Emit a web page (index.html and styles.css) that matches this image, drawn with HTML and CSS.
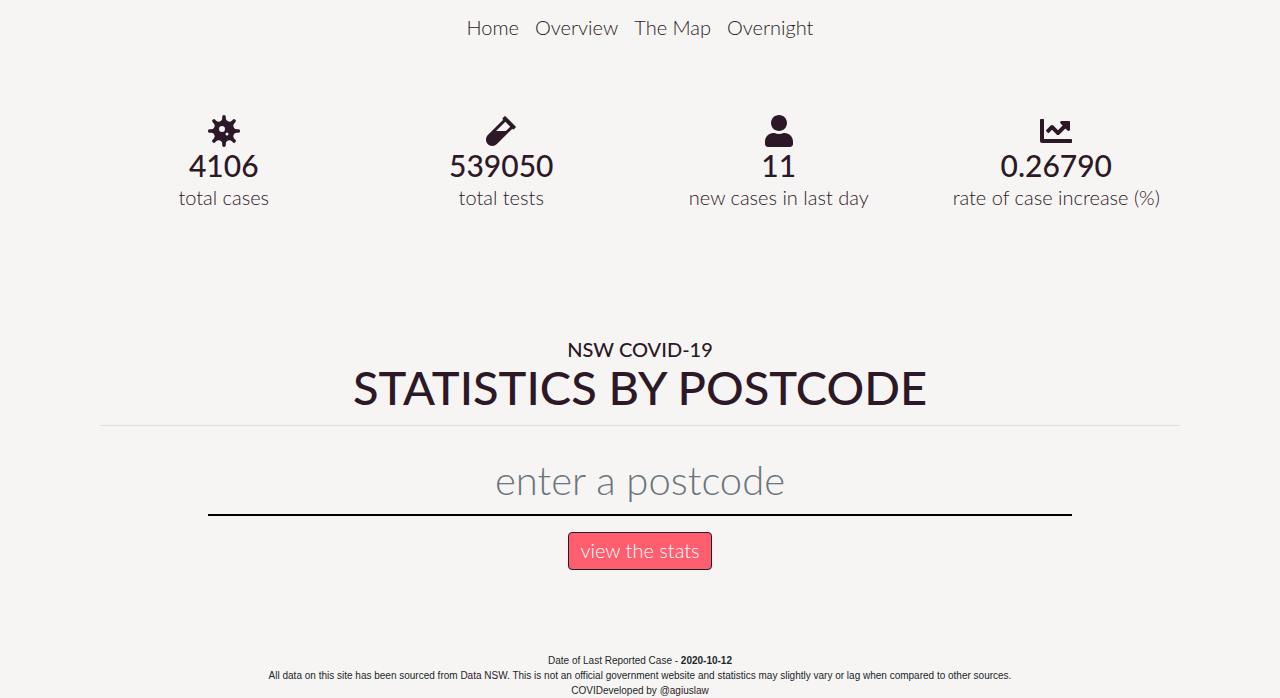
FILE: index.html
```html
<!DOCTYPE html>
<html lang="en">
<head>
<meta charset="utf-8">
<meta name="viewport" content="width=device-width, initial-scale=1">
<title>NSW COVID-19 Statistics by Postcode</title>
<link rel="stylesheet" href="styles.css">
</head>
<body>
<nav class="nav">
  <a class="nav-link" href="#">Home</a>
  <a class="nav-link" href="#">Overview</a>
  <a class="nav-link" href="#">The Map</a>
  <a class="nav-link" href="#">Overnight</a>
</nav>
<main class="container">
  <section class="stats">
    <div class="stat">
      <svg class="icon" viewBox="0 0 512 512" aria-hidden="true"><path d="M483.55,227.55H462c-50.68,0-76.07-61.27-40.23-97.11L437,115.19A28.44,28.44,0,0,0,396.8,75L381.56,90.22c-35.84,35.83-97.11,10.45-97.11-40.23V28.44a28.45,28.45,0,0,0-56.9,0V50c0,50.68-61.27,76.06-97.11,40.23L115.2,75A28.44,28.44,0,0,0,75,115.19l15.25,15.25c35.84,35.84,10.45,97.11-40.23,97.11H28.45a28.45,28.45,0,1,0,0,56.89H50c50.68,0,76.07,61.28,40.23,97.12L75,396.8A28.45,28.45,0,0,0,115.2,437l15.24-15.25c35.84-35.84,97.11-10.45,97.11,40.23v21.54a28.45,28.45,0,0,0,56.9,0V462c0-50.68,61.27-76.07,97.11-40.23L396.8,437A28.45,28.45,0,0,0,437,396.8l-15.25-15.24c-35.84-35.84-10.45-97.12,40.23-97.12h21.54a28.45,28.45,0,1,0,0-56.89ZM224,272a48,48,0,1,1,48-48A48,48,0,0,1,224,272Zm80,56a24,24,0,1,1,24-24A24,24,0,0,1,304,328Z"/></svg>
      <h2 class="stat-value">4106</h2>
      <p class="stat-label">total cases</p>
    </div>
    <div class="stat">
      <svg class="icon" viewBox="0 0 480 512" aria-hidden="true"><path d="M477.7 186.1L309.5 18.3c-3.1-3.1-8.2-3.1-11.3 0l-34 33.9c-3.1 3.1-3.1 8.2 0 11.3l11.2 11.1L33 316.5c-38.8 38.7-45.1 102-9.4 143.5 20.6 24 49.5 36 78.4 35.9 26.4 0 52.8-10 72.9-30.1l246.3-245.7 11.2 11.1c3.1 3.1 8.2 3.1 11.3 0l34-33.9c3.1-3 3.1-8.1 0-11.2zM318 256H161l148-147.7 78.5 78.3L318 256z"/></svg>
      <h2 class="stat-value">539050</h2>
      <p class="stat-label">total tests</p>
    </div>
    <div class="stat">
      <svg class="icon" viewBox="0 0 448 512" aria-hidden="true"><path d="M224 256c70.7 0 128-57.3 128-128S294.7 0 224 0 96 57.3 96 128s57.3 128 128 128zm89.6 32h-16.7c-22.2 10.2-46.9 16-72.9 16s-50.6-5.8-72.9-16h-16.7C60.2 288 0 348.2 0 422.4V464c0 26.5 21.5 48 48 48h352c26.5 0 48-21.5 48-48v-41.6c0-74.2-60.2-134.4-134.4-134.4z"/></svg>
      <h2 class="stat-value">11</h2>
      <p class="stat-label">new cases in last day</p>
    </div>
    <div class="stat">
      <svg class="icon" viewBox="0 0 512 512" aria-hidden="true"><path d="M496 384H64V80c0-8.84-7.16-16-16-16H16C7.16 64 0 71.16 0 80v336c0 17.67 14.33 32 32 32h464c8.84 0 16-7.16 16-16v-32c0-8.84-7.16-16-16-16zM464 96H345.94c-21.38 0-32.09 25.85-16.97 40.97l32.4 32.4L288 242.75l-73.37-73.37c-12.5-12.5-32.76-12.5-45.25 0l-68.69 68.69c-6.25 6.25-6.25 16.38 0 22.63l22.62 22.62c6.25 6.25 16.38 6.25 22.63 0L192 237.25l73.37 73.37c12.5 12.5 32.76 12.5 45.25 0l96-96 32.4 32.4c15.12 15.12 40.97 4.41 40.97-16.97V112c.01-8.84-7.15-16-16-16z"/></svg>
      <h2 class="stat-value">0.26790</h2>
      <p class="stat-label">rate of case increase (%)</p>
    </div>
  </section>
  <section class="search">
    <h1 class="title"><span class="title-small">NSW COVID-19</span> <span class="title-large">STATISTICS BY POSTCODE</span></h1>
    <form class="form">
      <input class="postcode" type="text" aria-label="Postcode" placeholder="enter a postcode">
      <button class="button" type="submit">view the stats</button>
    </form>
  </section>
</main>
<footer class="footer">
  <p>Date of Last Reported Case - <strong>2020-10-12</strong></p>
  <p>All data on this site has been sourced from <a href="#">Data NSW</a>. This is not an official government website and statistics may slightly vary or lag when compared to other sources.</p>
  <p>COVIDeveloped by <a href="#">@agiuslaw</a></p>
</footer>
</body>
</html>
```
FILE: styles.css
```css
*, *::before, *::after { box-sizing: border-box; }

body {
  margin: 0;
  background: #f6f5f3;
  color: #2d1827;
  font-family: Spartan, Lato, "Open Sans", sans-serif;
  font-weight: 300;
  font-size: 20px;
  line-height: 24px;
}

h1, h2, p { margin: 0; }
a { color: #2d1827; text-decoration: none; }

.nav {
  display: flex;
  flex-wrap: wrap;
  justify-content: center;
  padding: 7px 8px 8px;
}
.nav-link { padding: 8px; }

.container {
  max-width: 1140px;
  margin: 0 auto;
  padding: 0 30px;
}

.stats {
  display: grid;
  grid-template-columns: repeat(4, 1fr);
  margin: 0 -15px;
  padding-top: 60px;
}
.stat {
  display: flex;
  flex-direction: column;
  align-items: center;
  text-align: center;
}
.icon {
  height: 32px;
  fill: #2d1827;
}
.stat-value {
  font-size: 30px;
  font-weight: 500;
  line-height: 36px;
}
.stat-label { padding-top: 2px; }

.search { padding-top: 128px; }
.title {
  display: flex;
  flex-direction: column;
  border-bottom: 1px solid #dfdde3;
  padding-bottom: 12px;
  font-weight: 500;
  text-align: center;
}
.title-small {
  font-size: 20px;
  line-height: 24px;
}
.title-large {
  font-size: 47px;
  line-height: 52px;
}

.form {
  display: flex;
  flex-direction: column;
  align-items: center;
  gap: 16px;
  padding-top: 24px;
}
.postcode {
  width: 80%;
  height: 66px;
  padding: 0 12px 4px;
  border: 0;
  border-bottom: 2px solid #000;
  background: transparent;
  color: #2d1827;
  font: inherit;
  font-size: 40px;
  text-align: center;
}
.postcode::placeholder { color: #6c757d; opacity: 1; }
.button {
  height: 38px;
  padding: 0 11px 2px;
  border: 1px solid #2d1827;
  border-radius: 4px;
  background: #ff5e6e;
  color: #fff;
  font: inherit;
}

.footer {
  padding: 83px 16px 0;
  color: #212529;
  font-family: "Liberation Sans", Arial, sans-serif;
  font-size: 10px;
  font-weight: 400;
  line-height: 15px;
  text-align: center;
}
```
